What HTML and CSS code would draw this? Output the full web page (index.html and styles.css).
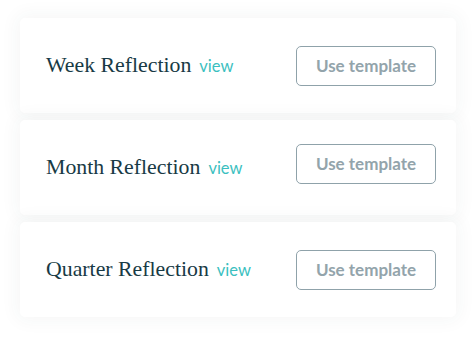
FILE: index.html
```html
<!DOCTYPE html>
<html>
<head>
<meta charset="utf-8">
<link rel="stylesheet" href="styles.css">
</head>
<body>
<div class="list">
  <div class="card">
    <div class="title-group"><span class="title">Week Reflection</span><a class="view">view</a></div>
    <button class="btn">Use template</button>
  </div>
  <div class="card">
    <div class="title-group"><span class="title">Month Reflection</span><a class="view">view</a></div>
    <button class="btn btn-raised">Use template</button>
  </div>
  <div class="card">
    <div class="title-group"><span class="title">Quarter Reflection</span><a class="view">view</a></div>
    <button class="btn">Use template</button>
  </div>
</div>
</body>
</html>
```
FILE: styles.css
```css
html, body {
  margin: 0;
  padding: 0;
  background: #ffffff;
}
.list {
  display: flex;
  flex-direction: column;
  gap: 7px;
  padding: 18px 20px;
}
.card {
  height: 95px;
  box-sizing: border-box;
  display: flex;
  align-items: center;
  justify-content: space-between;
  padding: 0 20px 0 26px;
  background: #fff;
  border-radius: 5px;
  box-shadow: 0 0 18px 4px rgba(40, 60, 80, 0.045);
}
.title-group {
  display: flex;
  align-items: baseline;
  gap: 8px;
}
.title {
  font-family: "Liberation Serif", serif;
  font-size: 21.8px;
  color: #183a45;
}
.view {
  font-family: "Lato", sans-serif;
  font-size: 16.5px;
  color: #3bbfc0;
}
.btn {
  width: 140px;
  height: 40px;
  box-sizing: border-box;
  border: 1px solid #8fa2aa;
  border-radius: 5px;
  background: #fff;
  font-family: "Lato", sans-serif;
  font-weight: 700;
  font-size: 17px;
  color: #93a4ab;
  padding: 0 0 1px;
}
.btn-raised {
  margin-bottom: 8px;
}
```
